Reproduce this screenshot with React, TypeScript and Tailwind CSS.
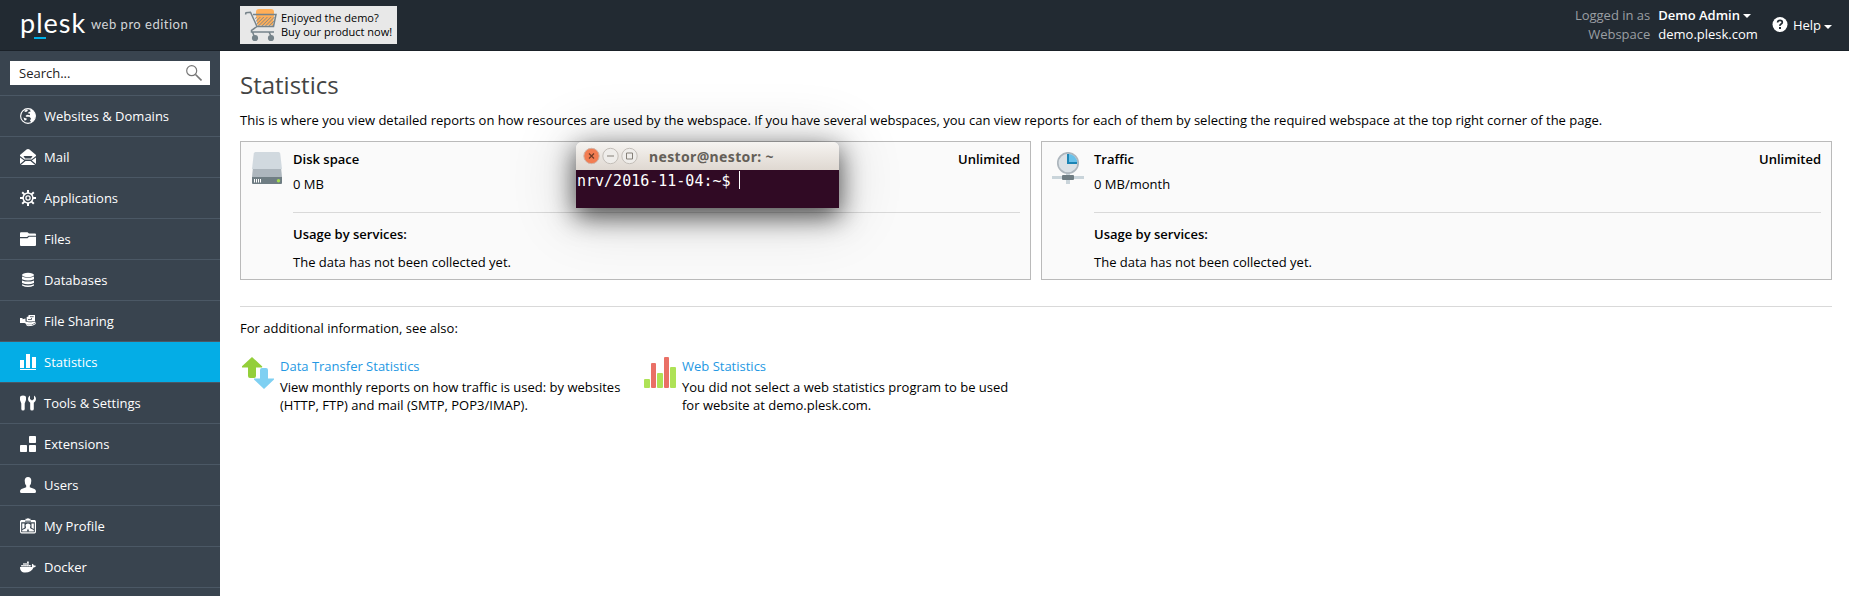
import React from "react";
import { FaDocker } from "react-icons/fa";

type IconProps = { children: React.ReactNode };

const Glyph = ({ children }: IconProps) => (
  <svg viewBox="0 0 16 16" className="h-4 w-4 shrink-0 text-white" fill="currentColor">
    {children}
  </svg>
);

const dark = "#39444f";

const items: { label: string; icon: React.ReactNode; active?: boolean }[] = [
  {
    label: "Websites & Domains",
    icon: (
      <Glyph>
        <circle cx="8" cy="8" r="7.400" fill="none" stroke="currentColor" strokeWidth="1.100" />
        <path d="M9.500.9 13 2.500 15.500 7l-1 4.500-3 3-1.500-1.700 1-2.300-1.500-1.700H6.200L5.500 8 7 6.800l3 .5V5.800L8 5.300l.7-1.300 2-.4z" />
        <path d="M4 3 6.500 1.500 8 2 7 3.500 5.500 4zM3.500 9.500l3.500 1.300-1 1.400-1.500.3z" />
      </Glyph>
    ),
  },
  {
    label: "Mail",
    icon: (
      <Glyph>
        <path d="M0 6 6.500.4Q8-.4 9.500.4L16 6v1l-4.500 3.500h-7L0 7z" />
        <path d="M3.500 7h9L11 9.500H5z" fill={dark} />
        <path d="M0 8.500 4.200 11.500 0 15zM16 8.500 11.800 11.500 16 15zM.8 16 5.500 12h5l4.700 4z" />
      </Glyph>
    ),
  },
  {
    label: "Applications",
    icon: (
      <Glyph>
        <g fill="none" stroke="currentColor">
          <circle cx="8" cy="8" r="4.900" strokeWidth="1.500" />
          <circle cx="8" cy="8" r="2.100" strokeWidth="1.300" />
          <path
            d="M8 0v3M8 13v3M0 8h3M13 8h3M2.200 2.200l2.200 2.200M11.600 11.600l2.200 2.200M13.800 2.200l-2.200 2.200M4.400 11.600l-2.200 2.200"
            strokeWidth="2"
          />
        </g>
      </Glyph>
    ),
  },
  {
    label: "Files",
    icon: (
      <Glyph>
        <path d="M0 2.500Q0 1.300 1 1.300h6.500L9 2.500h6q1 0 1 1v1.200H8.500L7 6H0z" />
        <path d="M0 7.200h7.500L9 5.800h7V14q0 1-1 1H1q-1 0-1-1z" />
      </Glyph>
    ),
  },
  {
    label: "Databases",
    icon: (
      <Glyph>
        <ellipse cx="8" cy="3" rx="6" ry="2.200" />
        <path d="M2 4.600q6 2.400 12 0v2.600q-6 2.600-12 0zM2 8.400q6 2.400 12 0V11q-6 2.600-12 0zM2 12.200q6 2.400 12 0v1.300q-6 3.200-12 0z" />
      </Glyph>
    ),
  },
  {
    label: "File Sharing",
    icon: (
      <Glyph>
        <path d="M0 5h2.500v1.200L5.500 5.500V8.500l3.500.7h2.500l3.500-.8.8 1.100-4.300 2.200H7.500L4.500 10H0z" />
        <path d="M6.700 4 8.500 3.500V2H15v6l-3 .5H8L6.700 8z" />
        <path d="M10 3.700h3.700M8 6.500h3.500V5" stroke={dark} strokeWidth=".8" fill="none" />
        <path d="M15.800 10.500Q13 13 8 12.700L6 11.500" fill="none" stroke="currentColor" />
      </Glyph>
    ),
  },
  {
    label: "Statistics",
    active: true,
    icon: (
      <Glyph>
        <path d="M0 6h4v8H0zM6 0h4v14H6zM12 3h4v11h-4zM0 15h16v1H0z" />
      </Glyph>
    ),
  },
  {
    label: "Tools & Settings",
    icon: (
      <Glyph>
        <path d="M0 2.500Q0 .5 3 .5t3 2V5L4.700 8.500V14q0 1.500-1.700 1.500T1.300 14V8.500L0 5z" />
        <path d="M10 .5v3.500l2 1.500 2-1.500V.5q2 1 2 3.500 0 2.500-2.200 3.800V14q0 1.500-1.800 1.500T10.200 14V7.800Q8 6.500 8 4 8 1.500 10 .5z" />
      </Glyph>
    ),
  },
  {
    label: "Extensions",
    icon: (
      <Glyph>
        <rect x="9" y="0" width="7" height="7" rx=".8" />
        <rect x="0" y="9" width="7" height="7" rx=".8" />
        <rect x="9" y="9" width="7" height="7" rx=".8" />
      </Glyph>
    ),
  },
  {
    label: "Users",
    icon: (
      <Glyph>
        <path d="M8 0q3.300 0 3.300 3.800Q11.300 7 9.800 8.500v1.700l4.700 1.800Q16 12.600 16 14.500q0 1.500-1.500 1.500h-13Q0 16 0 14.500q0-1.900 1.500-2.500l4.700-1.800V8.500Q4.700 7 4.700 3.800 4.700 0 8 0z" />
      </Glyph>
    ),
  },
  {
    label: "My Profile",
    icon: (
      <Glyph>
        <rect x=".6" y="2.600" width="14.800" height="12.200" rx="1" fill="none" stroke="currentColor" strokeWidth="1.200" />
        <path d="M1 2h4.500V.8H7L8 0l1 .8h1.500V2H15v2.300H1z" />
        <path d="M5 3.200h6" stroke={dark} strokeWidth=".9" />
        <path d="M2.200 13.500V12L5.500 10.500 6 9.500 5.500 7Q6 5.500 8 5.500T10.500 7L10 9.500l.5 1 3.300 1.500v1.500z" />
        <path d="M2.200 5.500H4.500v4.300l-2.300 1.200zM13.800 5.500H11.500v4.300l2.300 1.200z" />
        <path d="M8 10.500 6.800 13.500h2.400z" fill={dark} />
      </Glyph>
    ),
  },
  { label: "Docker", icon: <FaDocker className="h-4 w-4 shrink-0 text-white" /> },
];

const Caret = () => (
  <svg viewBox="0 0 8 4" className="h-1 w-2" fill="#fff">
    <path d="M0 0h8L4 4z" />
  </svg>
);

const Cart = () => (
  <svg viewBox="0 0 34 34" className="h-[34px] w-[34px] shrink-0">
    <defs>
      <pattern id="mesh" width="2.500" height="2.500" patternUnits="userSpaceOnUse" patternTransform="rotate(45)">
        <path d="M0 0v2.500" stroke="#76838a" strokeWidth="1.300" />
      </pattern>
    </defs>
    <path d="M12 4q0-3 3-3h12q3 0 3 3v3l-1 10.500H13.500L12 7z" fill="#ffae57" />
    <path d="M10.500 9h21l-2 9.500H13.500z" fill="url(#mesh)" />
    <path d="M1.500 6.500 2 4.800l4.500-.5L13 18.500h16.500L32 6.500H9M13 18.500 7.500 22.500V24H30M8.500 24l2 5M25 24l2.500 5" fill="none" stroke="#76838a" strokeWidth="1.500" />
    <g fill="#76838a">
      <circle cx="11" cy="30" r="3.100" />
      <circle cx="27" cy="30" r="3.100" />
    </g>
  </svg>
);

const DiskIcon = () => (
  <svg viewBox="0 0 32 32" className="h-8 w-8">
    <path d="M3.500 0h23Q28 0 28.200 1.500L30 17H0L1.800 1.500Q2 0 3.500 0z" fill="#d1d9df" />
    <path d="M.8 17h28.400l.8 8H0z" fill="#adb6bd" />
    <path d="M0 25h30v6q0 1-1 1H1q-1 0-1-1z" fill="#6f7d83" />
    <path d="M2.500 27v3.500M4.500 27v3.500M6.500 27v3.500M8.500 27v3.500" stroke="#fff" />
    <circle cx="26.500" cy="28.700" r="1.700" fill="#a4dc4f" />
  </svg>
);

const TrafficIcon = () => (
  <svg viewBox="0 0 32 32" className="-ml-px h-8 w-8">
    <path d="M0 24h32v3H0zM14 21h4v11h-4z" fill="#c9d4da" />
    <rect x="10" y="23" width="12" height="5" rx="1" fill="#6f7d83" />
    <circle cx="16" cy="11" r="10.200" fill="#dae1e6" stroke="#adb6bd" strokeWidth="1.700" />
    <path d="M16 1.700A9.300 9.300 0 0 1 25.300 11H16z" fill="#68c1ea" />
    <path d="M16 2v9h9" fill="none" stroke="#1b84b4" strokeWidth="2" />
  </svg>
);

const TransferIcon = () => (
  <svg viewBox="0 0 32 32" className="h-8 w-8">
    <path d="M10 0 20.300 9.500 20 10.500H14V19q0 2-2 2H8q-2 0-2-2v-8.500H0L-.3 9.500z" fill="#94cf3a" />
    <path d="M22 32 32 22.500V21.500H26V13q0-2-2-2h-4q-2 0-2 2v8.500h-6v1z" fill="#7fd0f2" />
  </svg>
);

const BarsIcon = () => (
  <svg viewBox="0 0 32 32" className="h-8 w-8">
    <g fill="#aee256">
      <rect x="0" y="22" width="6" height="9" rx="1" />
      <rect x="13" y="16" width="6" height="15" rx="1" />
      <rect x="26" y="10" width="6" height="21" rx="1" />
    </g>
    <g fill="#ea7066">
      <rect x="7" y="6" width="5" height="25" rx="1" />
      <rect x="20" y="0" width="5" height="31" rx="1" />
    </g>
  </svg>
);

const Panel = ({ icon, title, value }: { icon: React.ReactNode; title: string; value: string }) => (
  <section className="flex h-[139px] flex-1 border border-[#bababa] bg-[#fafafa] pt-2 pr-[10px]">
    <div className="w-[52px] shrink-0 pt-0.5 pl-[11px]">{icon}</div>
    <div className="flex-1">
      <div className="flex justify-between font-semibold">
        <span>{title}</span>
        <span>Unlimited</span>
      </div>
      <p className="mt-[7px]">{value}</p>
      <div className="mt-[19px] border-t border-[#d9d9d9] pt-3">
        <p className="font-semibold">Usage by services:</p>
        <p className="mt-2.5">The data has not been collected yet.</p>
      </div>
    </div>
  </section>
);

const Terminal = () => (
  <div className="absolute top-[142px] left-[576px] h-[66px] w-[263px] rounded-t-[6px] shadow-[0_8px_26px_1px_rgba(0,0,0,0.66),0_4px_60px_8px_rgba(0,0,0,0.14)]">
    <div className="flex h-7 items-center rounded-t-[6px] bg-linear-to-b from-[#f6f4f1] to-[#dfd8d1] pl-[7px]">
      <svg viewBox="0 0 56 18" className="h-[18px] w-14" fill="none">
        <circle cx="8.500" cy="9" r="7.700" fill="#f27d52" stroke="#cfb6a9" />
        <path d="m6 6.500 5 5m0-5-5 5" stroke="#6e3b27" strokeWidth="1.200" />
        <circle cx="27.500" cy="9" r="7.700" fill="#efedea" stroke="#c3beb8" />
        <path d="M24 9h7" stroke="#858078" />
        <circle cx="46.500" cy="9" r="7.700" fill="#efedea" stroke="#c3beb8" />
        <path d="M43.500 6h6v6h-6z" stroke="#858078" />
      </svg>
      <span className="ml-[10px] pt-px font-['Noto_Sans',sans-serif] text-[14px] leading-5 font-bold tracking-[0.35px] whitespace-nowrap text-[#645f58]">
        nestor@nestor: ~
      </span>
    </div>
    <div className="flex h-[38px] bg-[#300a24] pt-px pl-px">
      <span className="w-[153px] font-['DejaVu_Sans_Mono',monospace] text-[15px] leading-5 whitespace-pre text-white">
        nrv/2016-11-04:~$
      </span>
      <span className="ml-[9px] h-[18px] w-px bg-white" />
    </div>
  </div>
);

export default function App() {
  return (
    <div className="relative flex h-[596px] w-[1849px] flex-col overflow-hidden bg-white font-['Open_Sans',sans-serif] text-[13px] leading-[18px] text-black">
      <header className="flex h-[51px] shrink-0 border-b border-[#1a2128] bg-[#222a32] text-white">
        <div className="flex w-[240px] items-start pl-5">
          <div className="relative w-[65px] pt-[7px] font-['Lato',sans-serif] text-[27px] leading-8 tracking-[1px]">
            plesk
            <span className="absolute top-[37px] left-[14px] h-[2px] w-3 bg-[#00b0e8]" />
          </div>
          <span className="pt-[15px] pl-1.5 font-['Lato',sans-serif] text-[13px] tracking-[0.5px] whitespace-nowrap text-[#d3d6d8]">
            web pro edition
          </span>
        </div>
        <div className="mt-1.5 flex h-[38px] w-[157px] items-center bg-[#e8e8e8] pl-1 text-[11px] leading-[14px] text-black">
          <Cart />
          <div className="pl-[3px] whitespace-nowrap">
            <p>Enjoyed the demo?</p>
            <p>Buy our product now!</p>
          </div>
        </div>
        <div className="ml-auto flex pr-[17px]">
          <div className="grid grid-cols-[auto_auto] content-start gap-x-2 pt-1.5 leading-[19px]">
            <span className="text-right text-[#9a9fa3]">Logged in as</span>
            <span className="flex items-center gap-[3px] font-semibold">
              Demo Admin <Caret />
            </span>
            <span className="text-right text-[#9a9fa3]">Webspace</span>
            <span>demo.plesk.com</span>
          </div>
          <div className="flex items-start pt-4 pl-[14px]">
            <svg viewBox="0 0 16 16" className="h-4 w-4">
              <circle cx="8" cy="8.500" r="7.500" fill="#fff" />
              <path d="M5.600 6.500Q5.700 4.300 8 4.300t2.300 2q0 1.100-1.200 1.800T8 9.900" fill="none" stroke="#222a32" strokeWidth="1.700" />
              <path d="M7 11h2v1.900H7z" fill="#222a32" />
            </svg>
            <span className="pl-[5px]">Help</span>
            <span className="pt-[9px] pl-[3px]"><Caret /></span>
          </div>
        </div>
      </header>

      <div className="flex min-h-0 flex-1">
        <aside className="w-[220px] shrink-0 bg-[#39444f] text-white">
          <div className="h-[45px] border-b border-[#4b5865] px-2.5 pt-2.5">
            <div className="flex h-6 items-center justify-between bg-white pr-2 pl-[9px] text-[#222]">
              <span>Search...</span>
              <svg viewBox="0 0 16 16" className="h-4 w-4" fill="none" stroke="#777">
                <circle cx="5.700" cy="5.700" r="5" strokeWidth="1.200" />
                <path d="m9.500 9.500 6 6" strokeWidth="1.600" />
              </svg>
            </div>
          </div>
          <nav>
            {items.map((item) => (
              <a
                key={item.label}
                className={
                  item.active
                    ? "flex h-[41px] items-center gap-2 border-b border-[#4b5865] bg-[#04ade6] pl-5"
                    : "flex h-[41px] items-center gap-2 border-b border-[#4b5865] pl-5"
                }
              >
                {item.icon}
                <span>{item.label}</span>
              </a>
            ))}
          </nav>
        </aside>

        <main className="flex-1 pr-[17px] pl-5">
          <h1 className="pt-4 text-[24px] leading-9 text-[#444]">Statistics</h1>
          <p className="mt-2 whitespace-nowrap">
            This is where you view detailed reports on how resources are used by the webspace. If you have several
            webspaces, you can view reports for each of them by selecting the required webspace at the top right corner
            of the page.
          </p>
          <div className="mt-3 flex gap-2.5">
            <Panel icon={<DiskIcon />} title="Disk space" value="0 MB" />
            <Panel icon={<TrafficIcon />} title="Traffic" value="0 MB/month" />
          </div>
          <div className="mt-[26px] border-t border-[#d9d9d9] pt-3">
            <p>For additional information, see also:</p>
            <div className="mt-5 flex">
              <div className="flex w-[402px]">
                <div className="w-10 shrink-0 pl-0.5"><TransferIcon /></div>
                <div className="whitespace-nowrap">
                  <a className="text-[#2498e3]">Data Transfer Statistics</a>
                  <p className="mt-[3px]">View monthly reports on how traffic is used: by websites<br />(HTTP, FTP) and mail (SMTP, POP3/IMAP).</p>
                </div>
              </div>
              <div className="flex">
                <div className="w-10 shrink-0 pl-0.5"><BarsIcon /></div>
                <div className="whitespace-nowrap">
                  <a className="text-[#2498e3]">Web Statistics</a>
                  <p className="mt-[3px]">You did not select a web statistics program to be used<br />for website at demo.plesk.com.</p>
                </div>
              </div>
            </div>
          </div>
        </main>
      </div>
      <Terminal />
    </div>
  );
}
